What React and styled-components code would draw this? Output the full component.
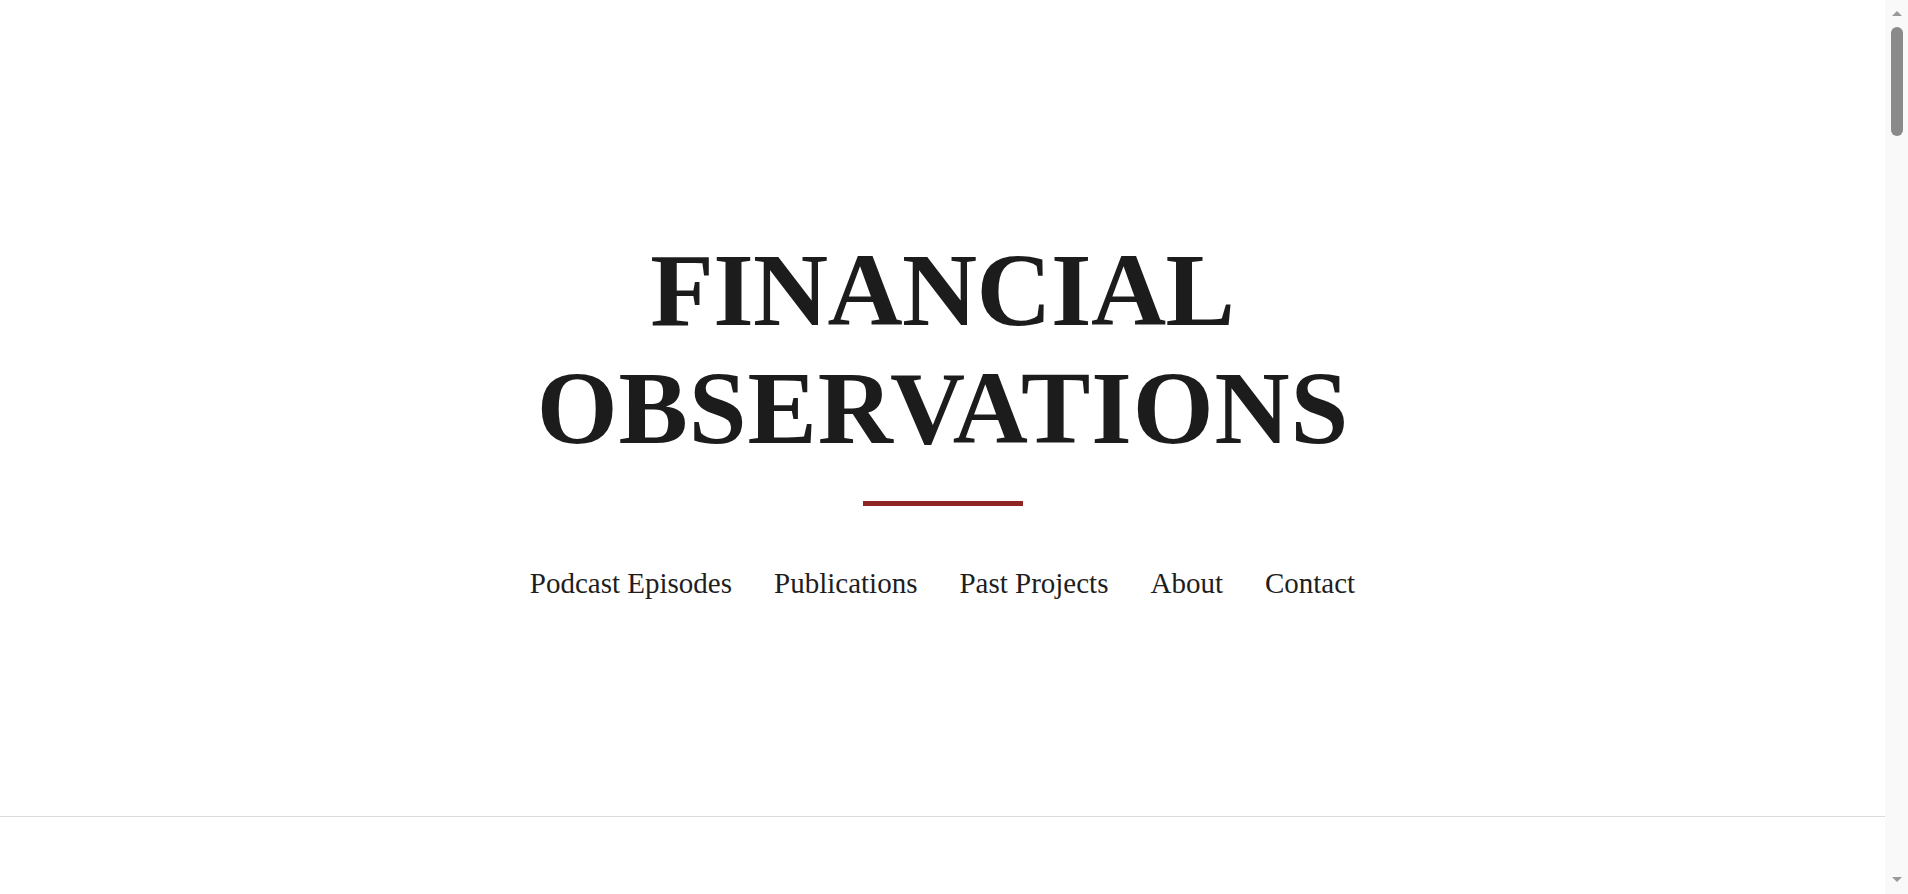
import React from 'react'
import styled, { createGlobalStyle } from 'styled-components'

const GlobalStyle = createGlobalStyle`
  html, body {
    margin: 0;
    padding: 0;
    background: #ffffff;
    overflow: hidden;
  }
  body {
    font-family: 'Liberation Serif', 'Times New Roman', serif;
    color: #1c1c1c;
  }
  a {
    color: inherit;
    text-decoration: none;
  }
`

const Frame = styled.div`
  display: flex;
  height: 100vh;
`

const Page = styled.div`
  flex: 1;
  min-width: 0;
  overflow: hidden;
`

const Masthead = styled.header`
  display: flex;
  flex-direction: column;
  align-items: center;
  padding: 231px 0 211px;
  border-bottom: 1px solid #dcdcdc;
`

const Title = styled.h1`
  margin: 0;
  display: flex;
  flex-direction: column;
  align-items: center;
  font-size: 104px;
  line-height: 118px;
  font-weight: 700;
  text-transform: uppercase;
  color: #1c1c1c;
`

const TitleLine = styled.span`
  letter-spacing: ${({ $spacing }) => $spacing}px;
  margin-right: ${({ $spacing }) => -$spacing}px;
`

const Rule = styled.div`
  width: 160px;
  height: 5px;
  margin-top: 34px;
  background: #8f2626;
`

const Nav = styled.nav`
  display: flex;
  gap: 42px;
  margin-top: 55px;
`

const NavLink = styled.a`
  font-size: 29px;
  line-height: 44px;
  color: #1e1e1e;
  white-space: nowrap;
`

const Main = styled.main`
  min-height: 6000px;
`

/* window scrollbar: track, arrows and thumb */
const Scrollbar = styled.div`
  width: 23px;
  flex-shrink: 0;
  display: flex;
  flex-direction: column;
  align-items: center;
  background: #f9f9f9;
  padding: 11px 0 12px;
  box-sizing: border-box;
`

const Arrow = styled.div`
  width: 0;
  height: 0;
  margin-left: 1px;
  border-left: 5px solid transparent;
  border-right: 5px solid transparent;
  ${({ $down }) =>
    $down
      ? 'border-top: 5px solid #9a9a9a; margin-top: auto;'
      : 'border-bottom: 5px solid #9a9a9a;'}
`

const Thumb = styled.div`
  width: 12px;
  height: 109px;
  margin-top: 11px;
  margin-left: 1px;
  border-radius: 6px;
  background: #8a8a8a;
`

const links = ['Podcast Episodes', 'Publications', 'Past Projects', 'About', 'Contact']

const App = () => {
  return (
    <>
      <GlobalStyle />
      <Frame>
        <Page>
          <Masthead>
            <Title>
              <TitleLine $spacing={-0.6}>Financial</TitleLine>
              <TitleLine $spacing={0.9}>Observations</TitleLine>
            </Title>
            <Rule />
            <Nav>
              {links.map((label) => (
                <NavLink key={label} href='#'>
                  {label}
                </NavLink>
              ))}
            </Nav>
          </Masthead>
          <Main />
        </Page>
        <Scrollbar>
          <Arrow />
          <Thumb />
          <Arrow $down />
        </Scrollbar>
      </Frame>
    </>
  )
}

export default App
